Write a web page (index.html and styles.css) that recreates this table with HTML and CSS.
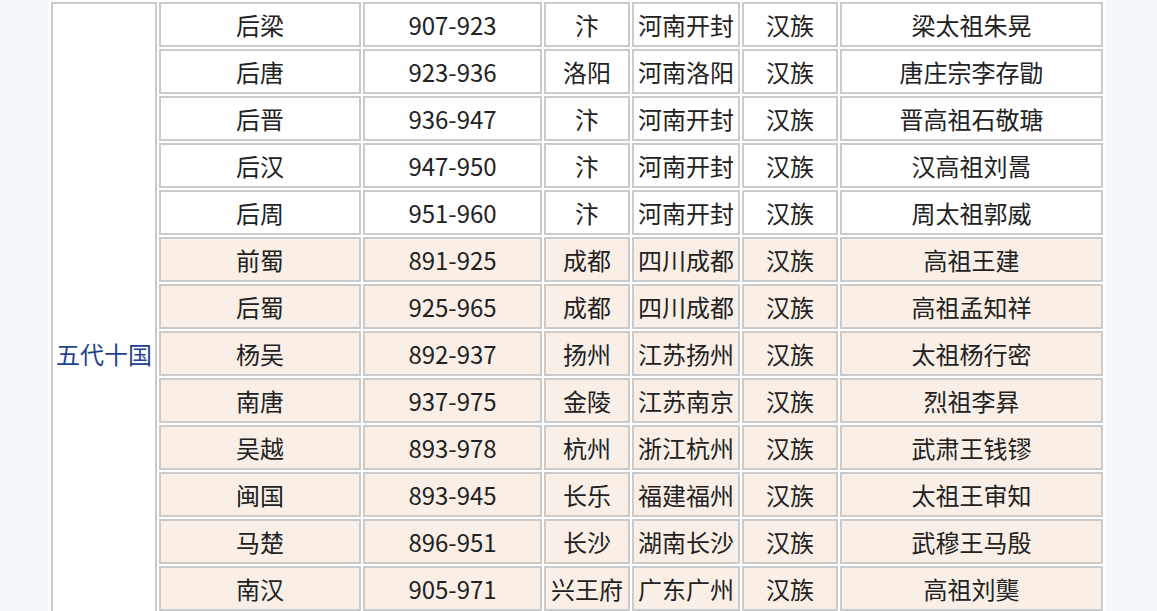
FILE: index.html
```html
<!DOCTYPE html>
<html lang="zh-CN">
<head>
<meta charset="utf-8">
<title>五代十国</title>
<link rel="stylesheet" href="styles.css">
</head>
<body>
<div class="page">
  <table class="dyn">
    <colgroup>
      <col class="c1"><col class="c2"><col class="c3"><col class="c4"><col class="c5"><col class="c6"><col class="c7">
    </colgroup>
    <tbody>
      <tr class="w">
        <td class="era" rowspan="15">五代十国</td>
        <td>后梁</td><td>907-923</td><td>汴</td><td>河南开封</td><td>汉族</td><td>梁太祖朱晃</td>
      </tr>
      <tr class="w"><td>后唐</td><td>923-936</td><td>洛阳</td><td>河南洛阳</td><td>汉族</td><td>唐庄宗李存勖</td></tr>
      <tr class="w"><td>后晋</td><td>936-947</td><td>汴</td><td>河南开封</td><td>汉族</td><td>晋高祖石敬瑭</td></tr>
      <tr class="w"><td>后汉</td><td>947-950</td><td>汴</td><td>河南开封</td><td>汉族</td><td>汉高祖刘暠</td></tr>
      <tr class="w"><td>后周</td><td>951-960</td><td>汴</td><td>河南开封</td><td>汉族</td><td>周太祖郭威</td></tr>
      <tr class="p"><td>前蜀</td><td>891-925</td><td>成都</td><td>四川成都</td><td>汉族</td><td>高祖王建</td></tr>
      <tr class="p"><td>后蜀</td><td>925-965</td><td>成都</td><td>四川成都</td><td>汉族</td><td>高祖孟知祥</td></tr>
      <tr class="p"><td>杨吴</td><td>892-937</td><td>扬州</td><td>江苏扬州</td><td>汉族</td><td>太祖杨行密</td></tr>
      <tr class="p"><td>南唐</td><td>937-975</td><td>金陵</td><td>江苏南京</td><td>汉族</td><td>烈祖李昪</td></tr>
      <tr class="p"><td>吴越</td><td>893-978</td><td>杭州</td><td>浙江杭州</td><td>汉族</td><td>武肃王钱镠</td></tr>
      <tr class="p"><td>闽国</td><td>893-945</td><td>长乐</td><td>福建福州</td><td>汉族</td><td>太祖王审知</td></tr>
      <tr class="p"><td>马楚</td><td>896-951</td><td>长沙</td><td>湖南长沙</td><td>汉族</td><td>武穆王马殷</td></tr>
      <tr class="p"><td>南汉</td><td>905-971</td><td>兴王府</td><td>广东广州</td><td>汉族</td><td>高祖刘龑</td></tr>
      <tr class="p"><td>荆南</td><td>924-963</td><td>江陵</td><td>湖北江陵</td><td>汉族</td><td>武信王高季兴</td></tr>
      <tr class="p"><td>北汉</td><td>951-979</td><td>太原</td><td>山西太原</td><td>汉族</td><td>世祖刘旻</td></tr>
    </tbody>
  </table>
</div>
</body>
</html>
```

FILE: styles.css
```css
html, body {
  margin: 0;
  padding: 0;
  background: #f5f8fc;
}

.page {
  display: flex;
  padding-left: 49px;
}

.dyn {
  border-collapse: separate;
  border-spacing: 2px;
  table-layout: fixed;
  width: 1056px;
  background: #ffffff;
  font-family: "Noto Sans CJK SC", "Noto Sans", sans-serif;
  font-size: 24px;
  color: #222222;
}

.c1 { width: 106px; }
.c2 { width: 202px; }
.c3 { width: 179px; }
.c4 { width: 86px; }
.c5 { width: 108px; }
.c6 { width: 96px; }
.c7 { width: 263px; }

.dyn td {
  box-sizing: border-box;
  height: 45px;
  padding: 0;
  border: 2px solid #cbcbcb;
  text-align: center;
  vertical-align: middle;
  white-space: nowrap;
  line-height: 41px;
}

.dyn tr.w td { background: #ffffff; }
.dyn tr.p td { background: #f9efe6; }

.dyn td.era {
  background: #ffffff;
  color: #1f4390;
}
```
